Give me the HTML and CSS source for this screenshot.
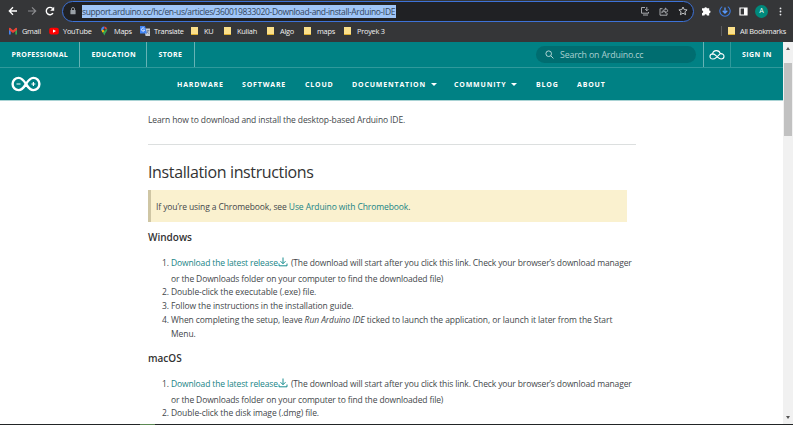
FILE: index.html
```html
<!DOCTYPE html>
<html lang="en">
<head>
<meta charset="utf-8">
<title>Download and install Arduino IDE</title>
<link rel="stylesheet" href="styles.css">
</head>
<body>
<div class="window">
  <div class="toolbar">
    <div class="nav-buttons">
      <svg width="10" height="10" viewBox="0 0 10 10" fill="none" stroke="#fff" stroke-width="1.3"><path d="M9 5H1.6M5 1.3 1.3 5 5 8.7"/></svg>
      <svg width="10" height="10" viewBox="0 0 10 10" fill="none" stroke="#8b8c8f" stroke-width="1.2"><path d="M1 5h7.4M5 1.3 8.7 5 5 8.7"/></svg>
      <svg width="10" height="10" viewBox="0 0 10 10"><path d="M8 7.2A3.7 3.7 0 1 1 7.7 2.5" fill="none" stroke="#fff" stroke-width="1.4"/><path d="M9.2.8v4H5.2z" fill="#fff"/></svg>
    </div>
    <div class="address">
      <svg class="lock" width="6" height="8" viewBox="0 0 6 8"><path d="M1.5 3.3V2a1.5 1.5 0 0 1 3 0v1.3" fill="none" stroke="#9aa0a6" stroke-width=".9"/><rect x=".4" y="3" width="5.2" height="4.3" rx=".6" fill="#9aa0a6"/></svg>
      <span class="url">support.arduino.cc/hc/en-us/articles/360019833020-Download-and-install-Arduino-IDE</span>
      <div class="address-icons">
        <svg width="10" height="10" viewBox="0 0 10 10" fill="none" stroke="#b6b8bc" stroke-width=".9"><path d="M5 1.5H1.500v5.700h7V6M3 9h5M6.800 1v3.500M5.200 3.200l1.600 1.600 1.600-1.600"/></svg>
        <svg width="10" height="10" viewBox="0 0 10 10" fill="none" stroke="#b6b8bc" stroke-width=".9"><path d="M3.500 2.700H1v6.500h7V7M2.800 6.800c.3-2 1.500-3 3.500-3V2l2.800 2.600-2.800 2.500V5.400c-1.600 0-2.700.4-3.500 1.400z"/></svg>
        <svg width="10" height="10" viewBox="0 0 10 10" fill="none" stroke="#d0d2d5" stroke-width=".9"><path d="m5 1 1.200 2.600 2.900.3-2.200 1.900.7 2.900L5 7.200 2.400 8.700l.7-2.900L.9 3.900l2.900-.3z"/></svg>
      </div>
    </div>
    <div class="tools">
      <svg width="10" height="10" viewBox="0 0 10 10" fill="#fff"><path d="M1 2.200h2.300a1.400 1.400 0 0 1 2.700 0h2.200v2.300a1.350 1.350 0 0 1 0 2.700v2.200H5.900a1.200 1.200 0 0 0-2.400 0H1V7a1.200 1.200 0 0 0 0-2.400z"/></svg>
      <svg width="12" height="12" viewBox="0 0 12 12" fill="none"><path d="M3.200 1.600a5.200 5.200 0 1 0 5.600 0" stroke="#3c78d8" stroke-width="1.100"/><path d="M6 2.500v5M3.700 5.700 6 8l2.300-2.300" stroke="#5b9cff" stroke-width="1.300"/></svg>
      <svg width="9" height="9" viewBox="0 0 9 9"><path d="M1 1h7v7H1z" fill="none" stroke="#fff" stroke-width="1.200"/><path d="M5 1h3v7H5z" fill="#fff"/></svg>
      <span class="avatar">A</span>
      <svg width="3" height="9" viewBox="0 0 3 9" fill="#e8eaed"><circle cx="1.500" cy="1.400" r=".9"/><circle cx="1.500" cy="4.500" r=".9"/><circle cx="1.500" cy="7.600" r=".9"/></svg>
    </div>
  </div>

  <div class="bookmarks">
    <div class="bookmark-list">
      <span><svg width="10" height="10" viewBox="0 0 10 10"><path d="M1 2.3h1.7v6.2H1z" fill="#4285f4"/><path d="M7.3 2.3H9v6.2H7.3z" fill="#34a853"/><path d="M1 2v2l4 3 4-3V2L8 1.8 5 4.2 2 1.8z" fill="#ea4335"/></svg>Gmail</span>
      <span><svg width="10" height="10" viewBox="0 0 10 10"><rect x=".2" y="1.7" width="9.6" height="6.8" rx="2" fill="#f00"/><path d="m4 3.5 3 1.6-3 1.6z" fill="#fff"/></svg>YouTube</span>
      <span><svg width="10" height="10" viewBox="0 0 10 10"><path d="M4.2.6A3.1 3.1 0 0 0 1.4 5L4.2 3.2z" fill="#4285f4"/><path d="M4.2.6a3.1 3.1 0 0 1 2.9 2L4.600 4z" fill="#ea4335"/><path d="M1.5 4.8 3.4 3l1.6 2L3 7z" fill="#fbbc04"/><path d="M7.1 2.5C8 5 5.2 6 4.6 9.5 4.2 9.5 4 8 2.7 6.7z" fill="#34a853"/><circle cx="4.3" cy="3.6" r="1.1" fill="#353638"/></svg>Maps</span>
      <span><svg width="10" height="10" viewBox="0 0 10 10"><path d="M4 2.5h6V10H5.6z" fill="#c8ccd2"/><path d="M0 0h5l2 7.5H0z" fill="#4285f4"/><path d="M4.4 2.6a1.6 1.6 0 1 0 .2 1.5H3.2" fill="none" stroke="#fff" stroke-width=".8"/><path d="M6.7 4.7h2.8M8 4v.8c0 1-1 2-1.6 2.4M7 5.5l2 2.4" stroke="#526985" stroke-width=".6" fill="none"/></svg>Translate</span>
      <span><i class="folder"></i>KU</span>
      <span><i class="folder"></i>Kuliah</span>
      <span><i class="folder"></i>Algo</span>
      <span><i class="folder"></i>maps</span>
      <span><i class="folder"></i>Proyek 3</span>
    </div>
    <div class="all-bookmarks"><i class="folder"></i>All Bookmarks</div>
  </div>

  <div class="viewport">
    <div class="page">
      <header>
        <div class="topbar">
          <div class="tabs"><a class="t1">PROFESSIONAL</a><a class="t2">EDUCATION</a><a class="t3">STORE</a></div>
          <div class="search"><svg width="9" height="9" viewBox="0 0 9 9" fill="none" stroke="#c5e0e0" stroke-width=".9"><circle cx="3.700" cy="3.700" r="2.800"/><path d="m5.800 5.800 2.600 2.600"/></svg>Search on Arduino.cc</div>
          <div class="cloud"><svg width="16" height="12" viewBox="0 0 16 12" fill="none" stroke="#fff" stroke-width="1.1" stroke-linecap="round" stroke-linejoin="round"><path d="M3.600 4.900C3.800 3 5.400 1.600 7.400 1.600c1.900 0 3.400 1.200 3.900 3L7.400 8.300C6.300 9.400 5.300 10 3.700 10 2.200 10 1 9 1 7.500 1 6 2 5 3.600 4.900c1.600 0 2.700.9 3.700 1.900l1.600 1.600c.9.900 1.800 1.600 3.300 1.600 1.600 0 2.800-1.100 2.800-2.700s-1.400-2.800-3.300-2.700"/></svg></div>
          <a class="signin">SIGN IN</a>
        </div>
        <div class="mainbar">
          <svg class="logo" width="30" height="16" viewBox="0 0 30 16" fill="none" stroke="#fff" stroke-width="2.400"><path d="M15 8C12.500 4 10.500 1.900 7.700 1.900a6.100 6.100 0 1 0 0 12.200C10.500 14.100 12.500 12 15 8s4.500-6.100 7.300-6.100a6.100 6.100 0 1 1 0 12.200C19.500 14.100 17.500 12 15 8z"/><path d="M5.500 8h4M20.400 8h4M22.400 6v4" stroke-width="1.200"/></svg>
          <nav><a>HARDWARE</a><a>SOFTWARE</a><a>CLOUD</a><a>DOCUMENTATION<i class="caret"></i></a><a>COMMUNITY<i class="caret"></i></a><a>BLOG</a><a>ABOUT</a></nav>
        </div>
      </header>
      <main>
        <p class="intro">Learn how to download and install the desktop-based Arduino IDE.</p>
        <hr>
        <h1>Installation instructions</h1>
        <div class="note">If you’re using a Chromebook, see <a>Use Arduino with Chromebook</a>.</div>
        <h2>Windows</h2>
        <ol>
          <li class="release"><a>Download the latest release<svg width="10" height="10" viewBox="0 0 10 10" fill="none" stroke="#008184" stroke-width=".9"><path d="M5 .5v6M2.500 4.200 5 6.700l2.500-2.500M1 6.500v2.300h8V6.500"/></svg></a> (The download will start after you click this link. Check your browser’s download manager<br>or the Downloads folder on your computer to find the downloaded file)</li>
          <li>Double-click the executable (.exe) file.</li>
          <li>Follow the instructions in the installation guide.</li>
          <li>When completing the setup, leave <em>Run Arduino IDE</em> ticked to launch the application, or launch it later from the Start<br>Menu.</li>
        </ol>
        <h2>macOS</h2>
        <ol>
          <li class="release"><a>Download the latest release<svg width="10" height="10" viewBox="0 0 10 10" fill="none" stroke="#008184" stroke-width=".9"><path d="M5 .5v6M2.500 4.200 5 6.700l2.500-2.500M1 6.500v2.300h8V6.500"/></svg></a> (The download will start after you click this link. Check your browser’s download manager<br>or the Downloads folder on your computer to find the downloaded file)</li>
          <li>Double-click the disk image (.dmg) file.</li>
        </ol>
      </main>
    </div>
    <div class="scrollbar"><i class="up"></i><div class="thumb"></div><i class="down"></i></div>
  </div>
  <div class="taskbar"><i></i></div>
</div>
</body>
</html>
```
FILE: styles.css
```css
* { box-sizing: border-box; }
body { margin: 0; overflow: hidden; font-family: "Open Sans", sans-serif; }
svg { display: block; flex: none; }
.window { width: 793px; height: 425px; display: flex; flex-direction: column; background: #fff; }

.toolbar { height: 22px; flex: none; background: #353638; display: flex; align-items: center; }
.nav-buttons { width: 62px; padding-left: 8px; display: flex; gap: 8.5px; }
.address { width: 632px; height: 21px; border: 1.5px solid #3d72d7; border-radius: 11px; background: #202124; display: flex; align-items: center; padding: 0 5px 0 7px; }
.lock { margin-right: 6px; }
.url { background: #9fc5f7; color: #34465c; font-size: 8.5px; letter-spacing: -.365px; line-height: 13px; height: 13px; width: 314px; white-space: nowrap; }
.address-icons { margin-left: auto; display: flex; gap: 9px; }
.tools { display: flex; align-items: center; margin-left: 7px; }
.tools svg:nth-child(2) { margin-left: 8px; }
.tools svg:nth-child(3) { margin-left: 8px; }
.avatar { width: 13px; height: 13px; margin: 0 11px 0 7px; border-radius: 50%; background: #00897b; color: #fff; font: 7px/13px Roboto, sans-serif; text-align: center; }

.bookmarks { height: 20px; flex: none; background: #353638; color: #f1f1f1; font: 7.4px/18px "Open Sans", sans-serif; display: flex; justify-content: space-between; padding-left: 8px; }
.bookmark-list { display: grid; grid-template-columns: 41px 51px 40px 51px 33px 43px 37px 40px 60px; }
.bookmark-list span, .all-bookmarks { display: flex; align-items: center; gap: 4px; height: 18px; white-space: nowrap; letter-spacing: -.25px; }
.bookmark-list span:nth-child(n+5) { gap: 6px; }
.folder { width: 7px; height: 8px; background: #fbe08a; border-bottom: 1px solid #dcae31; flex: none; }
.all-bookmarks { height: 10px; margin-top: 4px; padding-left: 6px; border-left: 1px solid #5a5b5e; gap: 5px; width: 72px; flex: none; }

.viewport { flex: 1; min-height: 0; display: flex; }
.page { width: 783px; overflow: hidden; }
header { background: #008184; color: #fff; height: 59px; border-bottom: 1px solid #a9d3d4; font-weight: 700; font-size: 7px; letter-spacing: .35px; }
.topbar { height: 26px; border-bottom: 1px solid #2f999b; display: flex; align-items: center; }
.tabs { display: flex; height: 25px; line-height: 25px; }
.tabs a { border-right: 1px solid #66b3b5; padding-left: 11.5px; white-space: nowrap; }
.t1 { width: 80px; }
.t2 { width: 67px; }
.t3 { width: 48px; }
.search { margin-left: 341px; width: 160px; height: 17px; border-radius: 9px; background: #006d70; color: #a9d0d1; font-size: 8.8px; font-weight: 400; letter-spacing: -.17px; display: flex; align-items: center; padding-left: 9px; gap: 6px; }
.cloud { width: 28px; height: 25px; margin-left: 7px; border-left: 1px solid #66b3b5; border-right: 1px solid #2f999b; display: flex; align-items: center; justify-content: center; }
.signin { padding-left: 11px; letter-spacing: .45px; white-space: nowrap; }
.mainbar { height: 32px; display: flex; align-items: center; padding-left: 11px; letter-spacing: .83px; }
.logo { margin-right: 136px; }
nav { display: grid; grid-template-columns: 65px 63px 47px 102px 82px 41px 50px; }
nav a { display: flex; align-items: center; gap: 5px; white-space: nowrap; }
.caret { border: 3px solid transparent; border-top: 3px solid #fff; border-bottom: 0; }

main { padding: 12px 0 0 148px; color: #43474b; font-size: 8.5px; letter-spacing: -.11px; line-height: 14px; white-space: nowrap; }
main a { color: #188486; }
p, h1, h2, ol, hr { margin: 0; }
hr { border: 0; height: 1px; width: 488px; background: #dcdfdf; margin-top: 17px; }
h1 { margin-top: 16px; font-size: 16px; line-height: 22px; letter-spacing: -.37px; font-weight: 400; color: #333; }
.note { width: 479px; height: 32px; margin-top: 7px; border-left: 3px solid #cfc6a4; background: #faf1cf; line-height: 34px; padding-left: 5px; letter-spacing: -.1px; }
h2 { margin-top: 8px; font-size: 10px; line-height: 15px; font-weight: 600; letter-spacing: 0; color: #333; }
ol { padding-left: 23px; margin-top: 10px; }
li { letter-spacing: -.085px; }
.release { line-height: 16px; margin-bottom: -2px; letter-spacing: -.13px; }
.release svg { display: inline-block; vertical-align: -1px; margin: 0 1px 0 0; }
ol + h2 { margin-top: 10px; }

.scrollbar { width: 10px; background: #f1f1f1; display: flex; flex-direction: column; align-items: center; padding: 5px 0; }
.up { border: 2.5px solid transparent; border-bottom: 3px solid #555; border-top: 0; }
.thumb { width: 8px; height: 73px; margin-top: 13px; background: #c1c1c1; }
.down { margin-top: auto; border: 2.5px solid transparent; border-top: 3px solid #555; border-bottom: 0; }
.taskbar { height: 1px; flex: none; background: #222526; padding-left: 140px; }
.taskbar i { display: block; width: 15px; height: 1px; background: #5b8752; }
```
